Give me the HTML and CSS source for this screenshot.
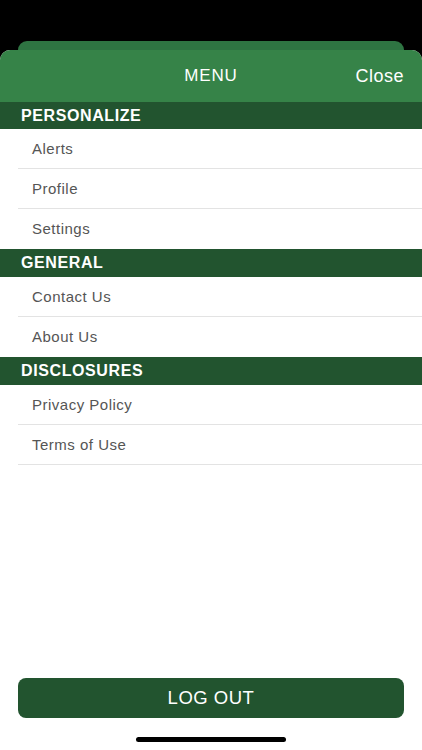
FILE: index.html
```html
<!DOCTYPE html>
<html>
<head>
<meta charset="utf-8">
<link rel="stylesheet" href="styles.css">
</head>
<body>
<div class="phone">
  <div class="backcard"></div>
  <div class="sheet">
    <div class="header">
      <span></span>
      <span class="title">MENU</span>
      <span class="close">Close</span>
    </div>
    <div class="section">PERSONALIZE</div>
    <div class="row">Alerts</div>
    <div class="row">Profile</div>
    <div class="row last">Settings</div>
    <div class="section">GENERAL</div>
    <div class="row">Contact Us</div>
    <div class="row last">About Us</div>
    <div class="section">DISCLOSURES</div>
    <div class="row">Privacy Policy</div>
    <div class="row">Terms of Use</div>
    <div class="spacer"></div>
    <div class="logout">LOG OUT</div>
    <div class="indicator-wrap"><div class="indicator"></div></div>
  </div>
</div>
</body>
</html>
```

FILE: styles.css
```css
* {
  box-sizing: border-box;
}
html, body {
  margin: 0;
  padding: 0;
  background: #000;
}
.phone {
  width: 422px;
  height: 750px;
  display: flex;
  flex-direction: column;
  font-family: "Liberation Sans", Arial, sans-serif;
  overflow: hidden;
}
.backcard {
  margin: 41px 18px 0;
  height: 9px;
  background: #2e7442;
  border-radius: 10px 10px 0 0;
  flex: none;
}
.sheet {
  flex: 1;
  background: #fff;
  border-radius: 10px 10px 0 0;
  overflow: hidden;
  display: flex;
  flex-direction: column;
}
.header {
  height: 52px;
  flex: none;
  background: #368348;
  display: grid;
  grid-template-columns: 1fr auto 1fr;
  align-items: center;
  padding: 0 18px;
  color: #fff;
}
.title {
  font-size: 17px;
  letter-spacing: 0.8px;
}
.close {
  justify-self: end;
  font-size: 18px;
  letter-spacing: 0.5px;
}
.section {
  height: 27px;
  flex: none;
  background: #22542f;
  color: #fff;
  font-weight: bold;
  font-size: 16px;
  letter-spacing: 0.6px;
  padding-left: 21px;
  display: flex;
  align-items: center;
}
.section + .row + .row + .row + .section,
.section + .row + .row + .section {
  height: 28px;
}
.row {
  height: 40px;
  flex: none;
  margin-left: 18px;
  border-bottom: 1px solid #e3e3e3;
  padding-left: 14px;
  display: flex;
  align-items: center;
  font-size: 15px;
  color: #555;
  letter-spacing: 0.5px;
}
.row.last {
  border-bottom-color: #fff;
}
.spacer {
  flex: 1;
}
.logout {
  flex: none;
  height: 40px;
  margin: 0 18px;
  background: #22542f;
  border-radius: 8px;
  color: #fff;
  font-size: 18.5px;
  display: flex;
  align-items: center;
  justify-content: center;
  letter-spacing: 0.5px;
}
.indicator-wrap {
  flex: none;
  height: 32px;
  display: flex;
  justify-content: center;
  padding-top: 19px;
}
.indicator {
  width: 150px;
  height: 5px;
  border-radius: 3px;
  background: #000;
}
```
